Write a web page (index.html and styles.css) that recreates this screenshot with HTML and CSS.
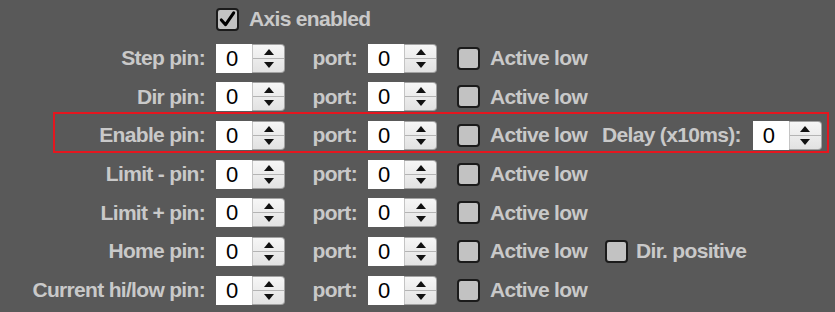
FILE: index.html
```html
<!DOCTYPE html>
<html lang="en">
<head>
  <meta charset="UTF-8">
  <title>Axis settings</title>
  <link rel="stylesheet" href="styles.css">
</head>
<body>
  <div class="panel">
    <div class="row">
      <span class="label"></span>
      <label class="check checked first"><span class="box"><svg viewBox="0 0 20 20"><path d="M3.5 10.5 L8 15.5 L16.5 3" /></svg></span>Axis enabled</label>
    </div>

    <div class="row">
      <span class="label">Step pin:</span>
      <div class="spin"><span class="value">0</span><span class="arrows"><i class="up"></i><i class="down"></i></span></div>
      <span class="port">port:</span>
      <div class="spin"><span class="value">0</span><span class="arrows"><i class="up"></i><i class="down"></i></span></div>
      <label class="check"><span class="box"></span>Active low</label>
    </div>

    <div class="row">
      <span class="label">Dir pin:</span>
      <div class="spin"><span class="value">0</span><span class="arrows"><i class="up"></i><i class="down"></i></span></div>
      <span class="port">port:</span>
      <div class="spin"><span class="value">0</span><span class="arrows"><i class="up"></i><i class="down"></i></span></div>
      <label class="check"><span class="box"></span>Active low</label>
    </div>

    <div class="row highlight">
      <span class="label">Enable pin:</span>
      <div class="spin"><span class="value">0</span><span class="arrows"><i class="up"></i><i class="down"></i></span></div>
      <span class="port">port:</span>
      <div class="spin"><span class="value">0</span><span class="arrows"><i class="up"></i><i class="down"></i></span></div>
      <label class="check"><span class="box"></span>Active low</label>
      <span class="delay">Delay (x10ms):</span>
      <div class="spin"><span class="value">0</span><span class="arrows"><i class="up"></i><i class="down"></i></span></div>
    </div>

    <div class="row">
      <span class="label">Limit - pin:</span>
      <div class="spin"><span class="value">0</span><span class="arrows"><i class="up"></i><i class="down"></i></span></div>
      <span class="port">port:</span>
      <div class="spin"><span class="value">0</span><span class="arrows"><i class="up"></i><i class="down"></i></span></div>
      <label class="check"><span class="box"></span>Active low</label>
    </div>

    <div class="row">
      <span class="label">Limit + pin:</span>
      <div class="spin"><span class="value">0</span><span class="arrows"><i class="up"></i><i class="down"></i></span></div>
      <span class="port">port:</span>
      <div class="spin"><span class="value">0</span><span class="arrows"><i class="up"></i><i class="down"></i></span></div>
      <label class="check"><span class="box"></span>Active low</label>
    </div>

    <div class="row">
      <span class="label">Home pin:</span>
      <div class="spin"><span class="value">0</span><span class="arrows"><i class="up"></i><i class="down"></i></span></div>
      <span class="port">port:</span>
      <div class="spin"><span class="value">0</span><span class="arrows"><i class="up"></i><i class="down"></i></span></div>
      <label class="check"><span class="box"></span>Active low</label>
      <label class="check extra"><span class="box"></span>Dir. positive</label>
    </div>

    <div class="row">
      <span class="label">Current hi/low pin:</span>
      <div class="spin"><span class="value">0</span><span class="arrows"><i class="up"></i><i class="down"></i></span></div>
      <span class="port">port:</span>
      <div class="spin"><span class="value">0</span><span class="arrows"><i class="up"></i><i class="down"></i></span></div>
      <label class="check"><span class="box"></span>Active low</label>
    </div>
  </div>
</body>
</html>
```

FILE: styles.css
```css
body {
  margin: 0;
  background-color: #595959;
  font-family: "Liberation Sans", Arial, sans-serif;
  color: #c9c9c9;
}

.panel {
  display: flex;
  flex-direction: column;
}

.row {
  position: relative;
  display: flex;
  align-items: center;
  height: 38.7px;
  font-size: 21px;
  font-weight: bold;
  letter-spacing: -0.68px;
  white-space: nowrap;
}

.label {
  width: 205px;
  margin-right: 11px;
  text-align: right;
}

.port {
  width: 72px;
  margin-right: 11px;
  text-align: right;
}

.delay {
  margin-left: 15px;
  margin-right: 12px;
}

/* red annotation frame round the enable row */
.highlight::after {
  content: "";
  position: absolute;
  left: 53px;
  top: -4px;
  width: 772px;
  height: 37px;
  border: 2px solid #e4161f;
}

/* spin box */
.spin {
  display: flex;
  height: 29px;
}

.spin .value {
  width: 36px;
  box-sizing: border-box;
  padding-left: 10px;
  background-color: #fff;
  color: #000;
  font-weight: normal;
  font-size: 22px;
  letter-spacing: 0;
  line-height: 29px;
}

.spin .arrows {
  width: 33px;
  box-sizing: border-box;
  display: flex;
  flex-direction: column;
  border: 1px solid #a2a2a2;
  border-left: 1px solid #c4c4c4;
  border-radius: 0 4px 4px 0;
  background: linear-gradient(#f6f6f6, #e2e2e2);
}

.spin .arrows i {
  flex: 1;
  display: flex;
  justify-content: center;
  align-items: center;
}

.spin .arrows .up {
  border-bottom: 1px solid #b4b4b4;
}

.spin .arrows .up::before,
.spin .arrows .down::before {
  content: "";
  width: 0;
  height: 0;
  border-left: 5.5px solid transparent;
  border-right: 5.5px solid transparent;
}

.spin .arrows .up::before {
  border-bottom: 6px solid #111;
  margin-top: 1px;
}

.spin .arrows .down::before {
  border-top: 6px solid #111;
  margin-bottom: 1px;
}

/* checkboxes */
.check {
  display: flex;
  align-items: center;
  gap: 10px;
  margin-left: 20px;
}

.check.first {
  margin-left: 0;
}

.check.extra {
  margin-left: 18px;
  gap: 8px;
}

.check .box {
  width: 23px;
  height: 23px;
  box-sizing: border-box;
  border: 2px solid #1b1b1b;
  border-radius: 4px;
  background-color: #c2c2c2;
  display: flex;
  align-items: center;
  justify-content: center;
}

.check .box svg {
  width: 19px;
  height: 19px;
}

.check .box path {
  fill: none;
  stroke: #000;
  stroke-width: 3.2;
  stroke-linecap: round;
  stroke-linejoin: round;
}
```
